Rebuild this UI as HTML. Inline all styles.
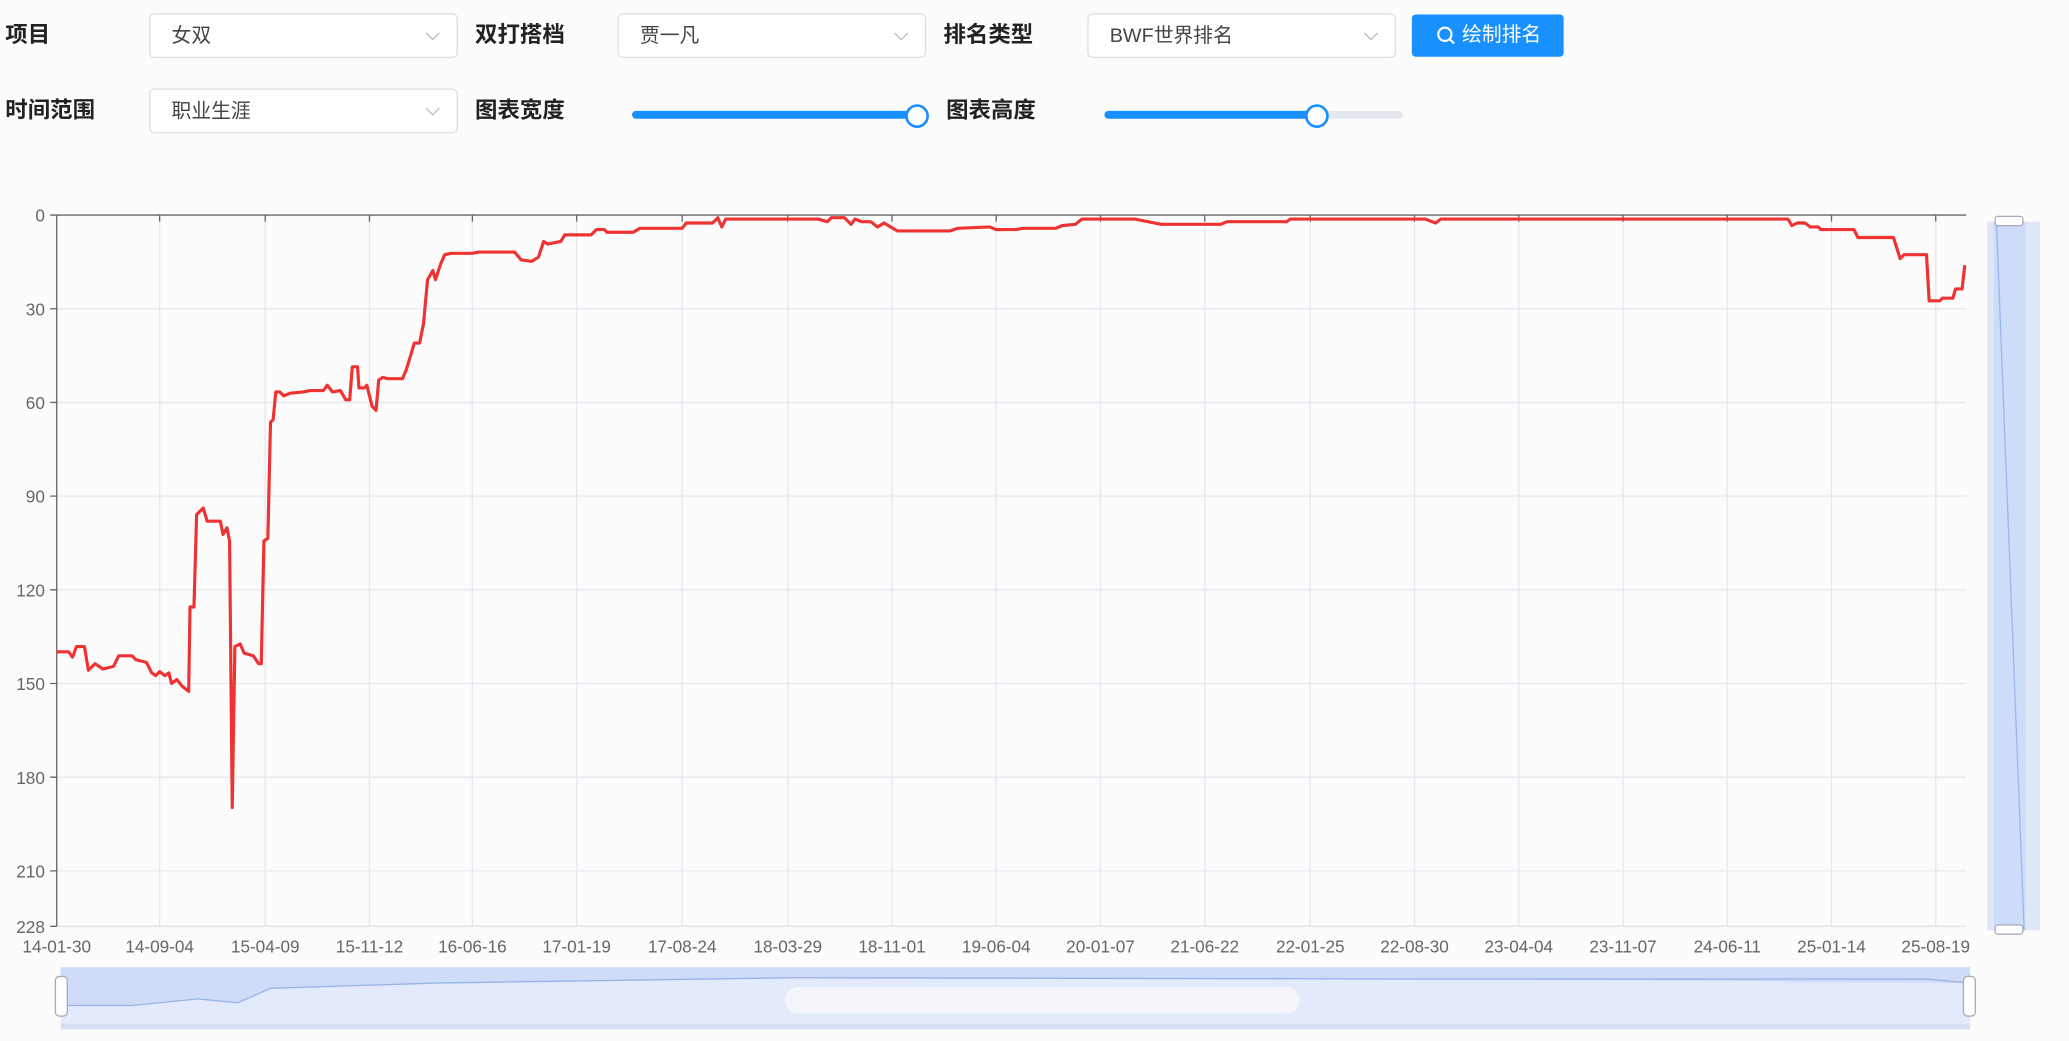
<!DOCTYPE html>
<html><head><meta charset="utf-8"><style>
html,body{margin:0;padding:0;background:#fcfcfc;overflow:hidden;width:2069px;height:1041px}
#s{position:absolute;left:0;top:0;width:1568px;height:789px;transform:scale(1.31952);transform-origin:0 0;font-family:"Liberation Sans","Noto Sans CJK SC",sans-serif}
.l{position:absolute;font-size:17px;font-weight:bold;color:#222;line-height:20px}
.sel{position:absolute;height:34px;width:234px;border:1px solid #dcdfe6;border-radius:4px;background:#fff;box-sizing:border-box;font-size:15px;color:#444;line-height:34px;padding-left:16px}
.sel svg{position:absolute;right:12px;top:13px}
.btn{position:absolute;left:1070px;top:11px;width:115px;height:32px;background:#1890ff;border-radius:3px;color:#fff;font-size:15px;line-height:32px}
</style></head><body><div id="s">
<div class="l" style="left:4px;top:17px">项目</div>
<div class="sel" style="left:113px;top:10px">女双<svg width="12" height="8"><path d="M1 1L6 6L11 1" fill="none" stroke="#b8bcc4" stroke-width="1"/></svg></div>
<div class="l" style="left:360px;top:17px">双打搭档</div>
<div class="sel" style="left:468px;top:10px">贾一凡<svg width="12" height="8"><path d="M1 1L6 6L11 1" fill="none" stroke="#b8bcc4" stroke-width="1"/></svg></div>
<div class="l" style="left:715px;top:17px">排名类型</div>
<div class="sel" style="left:824px;top:10px">BWF世界排名<svg width="12" height="8"><path d="M1 1L6 6L11 1" fill="none" stroke="#b8bcc4" stroke-width="1"/></svg></div>
<div class="btn"><svg width="14" height="14" style="position:absolute;left:19px;top:9px"><circle cx="6" cy="6" r="5" fill="none" stroke="#fff" stroke-width="1.6"/><path d="M9.5 9.5L13 13" stroke="#fff" stroke-width="1.6"/></svg><span style="position:absolute;left:38px">绘制排名</span></div>
<div class="l" style="left:4px;top:74px">时间范围</div>
<div class="sel" style="left:113px;top:67px">职业生涯<svg width="12" height="8"><path d="M1 1L6 6L11 1" fill="none" stroke="#b8bcc4" stroke-width="1"/></svg></div>
<div class="l" style="left:360px;top:74px">图表宽度</div>
<div style="position:absolute;left:479px;top:84px;width:216px;height:6px;border-radius:3px;background:#1890ff"></div>
<div style="position:absolute;left:686px;top:79px;width:14px;height:14px;border:2px solid #1890ff;border-radius:50%;background:#fff"></div>
<div class="l" style="left:717px;top:74px">图表高度</div>
<div style="position:absolute;left:837px;top:84px;width:226px;height:6px;border-radius:3px;background:#e4e7ed"></div>
<div style="position:absolute;left:837px;top:84px;width:161px;height:6px;border-radius:3px;background:#1890ff"></div>
<div style="position:absolute;left:989px;top:79px;width:14px;height:14px;border:2px solid #1890ff;border-radius:50%;background:#fff"></div>
<svg width="1568" height="789" style="position:absolute;left:0;top:0" font-family="Liberation Sans, sans-serif" font-size="13" fill="#666">
<g stroke="#e4e8f0" stroke-width="1">
<path d="M43 234H1490M43 305H1490M43 376H1490M43 447H1490M43 518H1490M43 589H1490M43 660H1490"/>
<path d="M121 163V702M201 163V702M280 163V702M358 163V702M437 163V702M517 163V702M597 163V702M676 163V702M755 163V702M834 163V702M913 163V702M993 163V702M1072 163V702M1151 163V702M1230 163V702M1309 163V702M1388 163V702M1467 163V702"/>
</g>
<path d="M43 702H1490" stroke="#dde1e8"/>
<path d="M43 163V702M38 163H43M38 234H43M38 305H43M38 376H43M38 447H43M38 518H43M38 589H43M38 660H43M38 702H43" stroke="#666" fill="none"/>
<path d="M43 163H1490M121 163v5M201 163v5M280 163v5M358 163v5M437 163v5M517 163v5M597 163v5M676 163v5M755 163v5M834 163v5M913 163v5M993 163v5M1072 163v5M1151 163v5M1230 163v5M1309 163v5M1388 163v5M1467 163v5" stroke="#666"/>
<g text-anchor="end"><text x="34" y="168">0</text><text x="34" y="239">30</text><text x="34" y="310">60</text><text x="34" y="381">90</text><text x="34" y="452">120</text><text x="34" y="523">150</text><text x="34" y="594">180</text><text x="34" y="665">210</text><text x="34" y="707">228</text></g>
<g text-anchor="middle"><text x="43" y="722">14-01-30</text><text x="121" y="722">14-09-04</text><text x="201" y="722">15-04-09</text><text x="280" y="722">15-11-12</text><text x="358" y="722">16-06-16</text><text x="437" y="722">17-01-19</text><text x="517" y="722">17-08-24</text><text x="597" y="722">18-03-29</text><text x="676" y="722">18-11-01</text><text x="755" y="722">19-06-04</text><text x="834" y="722">20-01-07</text><text x="913" y="722">21-06-22</text><text x="993" y="722">22-01-25</text><text x="1072" y="722">22-08-30</text><text x="1151" y="722">23-04-04</text><text x="1230" y="722">23-11-07</text><text x="1309" y="722">24-06-11</text><text x="1388" y="722">25-01-14</text><text x="1467" y="722">25-08-19</text></g>
<polyline fill="none" stroke="#ee3333" stroke-width="2.4" stroke-linejoin="round" points="43,494 52,494 55,498 58,490 64,490 67,508 72,503 78,507 86,505 90,497 100,497 103,500 111,502 115,510 118,512 121,509 125,512 128,510 130,518 134,515 138,520 143,524 144,460 147,460 149,390 154,385 157,395 167,395 169,405 172,400 174,410 176,612 178,490 182,488 185,495 192,497 196,503 198,503 200,410 203,408 205,320 207,318 209,297 212,297 215,300 220,298 230,297 235,296 245,296 248,292 252,297 258,296 262,303 265,303 267,278 271,278 272,294 276,294 278,292 282,308 285,311 287,288 290,286 294,287 305,287 308,280 314,260 318,260 321,245 324,212 328,205 330,212 334,200 337,193 342,192 358,192 363,191 390,191 395,197 403,198 408,195 412,183 415,185 425,183 428,178 448,178 452,174 458,174 460,176 480,176 485,173 517,173 520,169 540,169 544,165 547,172 550,166 620,166 627,168 630,165 640,165 645,170 648,166 653,168 660,168 665,172 670,169 675,172 680,175 720,175 726,173 750,172 755,174 770,174 775,173 800,173 805,171 815,170 820,166 860,166 880,170 925,170 930,168 975,168 978,166 1080,166 1088,169 1092,166 1355,166 1358,171 1362,169 1368,169 1372,172 1378,172 1380,174 1405,174 1408,180 1435,180 1440,196 1443,193 1460,193 1462,228 1470,228 1472,226 1480,226 1482,219 1487,219 1489,201"/>
<rect x="1506" y="168" width="40" height="537" fill="#dfe7f7"/>
<rect x="1511" y="168" width="24" height="537" fill="#cddcf8"/>
<path d="M1513 168L1534 705" stroke="#9db6ee"/>
<rect x="1512" y="164" width="21" height="7" rx="2" fill="#fff" stroke="#aab"/>
<rect x="1512" y="701" width="21" height="7" rx="2" fill="#fff" stroke="#aab"/>
<rect x="46" y="733" width="1447" height="47" fill="#e2eafb"/>
<path d="M46 733H1493V745L1100 742L600 741L330 745L205 749L180 760L150 757L100 762L46 762Z" fill="#cfdcf7"/>
<path d="M46 762L100 762L150 757L180 760L205 749L330 745L600 741L1100 742L1460 742L1493 745" fill="none" stroke="#98b3ea"/>
<rect x="46" y="776" width="1447" height="4" fill="#d5ddf0"/>
<rect x="42" y="740" width="9" height="30" rx="3" fill="#fff" stroke="#aab"/>
<rect x="1488" y="740" width="9" height="30" rx="3" fill="#fff" stroke="#aab"/>
<rect x="595" y="748" width="390" height="20" rx="10" fill="#f6f7fb" opacity="0.9"/>
</svg>
</div></body></html>
